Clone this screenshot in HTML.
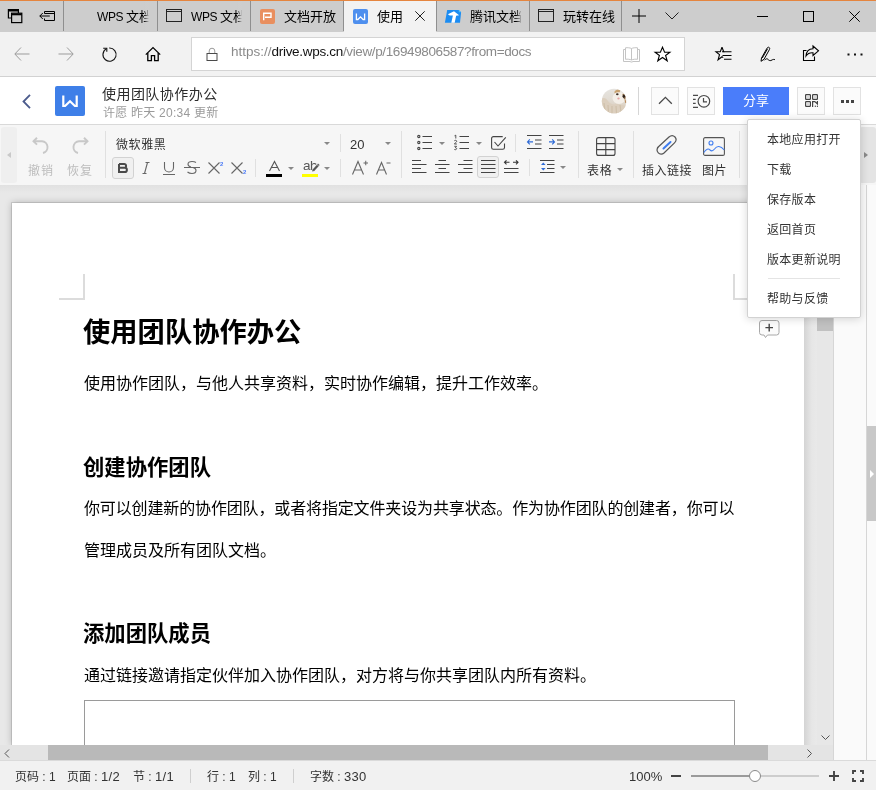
<!DOCTYPE html>
<html lang="zh-CN">
<head>
<meta charset="utf-8">
<title>使用团队协作办公</title>
<style>
*{box-sizing:border-box;margin:0;padding:0}
html,body{width:876px;height:790px;overflow:hidden;background:#fff}
body{position:relative;font-family:"Liberation Sans","Noto Sans CJK SC",sans-serif;color:#333;font-size:12px}
.a{position:absolute}
.t{position:absolute;white-space:nowrap;line-height:16px;height:16px;will-change:transform}
svg{position:absolute;overflow:visible}
/* browser chrome */
#accent{left:0;top:0;width:876px;height:1px;background:#e5853f}
#tabbar{left:0;top:1px;width:876px;height:31px;background:#cdcdcd}
.tsep{top:1px;width:1px;height:30px;background:#8f8f8f}
.tab{top:1px;height:31px;overflow:hidden}
.tabtxt{font-size:13px;color:#000;top:8px}
#addr{left:0;top:32px;width:876px;height:45px;background:#f2f2f2;border-bottom:1px solid #d2d2d2}
#urlbox{left:191px;top:37px;width:494px;height:34px;background:#fff;border:1px solid #d4d4d4}
/* wps header */
#hdr{left:0;top:77px;width:876px;height:48px;background:#fff;border-bottom:1px solid #d9d9d9}
.hbtn{top:87px;width:28px;height:28px;border:1px solid #e2e2e2;background:#fbfbfb}
/* toolbar */
#tb{left:0;top:125px;width:876px;height:60px;background:#f6f6f6}
.vsep{width:1px;background:#e0e0e0}
.lab{font-size:12px;color:#333}
.dis{color:#bdbdbd}
.dd{width:0;height:0;border-left:3px solid transparent;border-right:3px solid transparent;border-top:3px solid #888}
/* doc */
#docbg{left:0;top:185px;width:834px;height:560px;background:linear-gradient(180deg,#e1e1e1,#e8e8e8 8px,#e8e8e8)}
#page{left:12px;top:203px;width:792px;height:542px;background:#fff;box-shadow:0 0 0 1px rgba(0,0,0,.10),0 0 7px rgba(0,0,0,.25)}
.p{font-size:16px;line-height:24px;height:24px;color:#000}
.h1{font-size:27.3px;line-height:36px;height:36px;font-weight:700;color:#000}
.h2{font-size:21.33px;line-height:30px;height:30px;font-weight:700;color:#000}
/* menu */
#menu{left:747px;top:119px;width:114px;height:199px;background:#fff;border:1px solid #d2d2d2;border-radius:2px;box-shadow:0 1px 8px rgba(0,0,0,.16)}
.mi{left:767px;font-size:12px;color:#333;letter-spacing:0.3px}
/* status */
#status{left:0;top:760px;width:876px;height:30px;background:#f1f1f1;border-top:1px solid #dadada}
.st{font-size:12px;color:#333;top:769px}
</style>
</head>
<body>
<!-- BROWSER TABBAR -->
<div class="a" id="accent"></div>
<div class="a" id="tabbar"></div>
<!-- tab bar icons -->
<svg style="left:7px;top:8px" width="16" height="16" viewBox="0 0 16 16" fill="none" stroke="#000" stroke-width="1.200"><path d="M11.400 5V1.500H1.400V10h3.200"/><path d="M1.400 2.600h10" stroke-width="1.800"/><rect x="4.600" y="5.200" width="10.200" height="9.400"/><path d="M4.600 6.400h10.200" stroke-width="1.800"/></svg>
<svg style="left:39px;top:10px" width="17" height="12" viewBox="0 0 17 12" fill="none" stroke="#000" stroke-width="1"><path d="M5.5 3.5v-2h10v9h-10v-2"/><path d="M5.5 3.5h10" stroke-width="1"/><path d="M0.8 6h10M3.8 3L0.8 6l3 3"/></svg>
<div class="a tsep" style="left:63px"></div>
<div class="a tab" style="left:64px;width:93px"><div class="t tabtxt" style="left:33px"><span style="font-size:12px;letter-spacing:-0.4px">WPS </span>文档</div><div class="a" style="left:80px;top:0;width:13px;height:30px;background:linear-gradient(90deg,rgba(205,205,205,0),#cdcdcd 5px)"></div></div>
<div class="a tsep" style="left:157px"></div>
<div class="a tab" style="left:158px;width:92px"><div class="t tabtxt" style="left:33px"><span style="font-size:12px;letter-spacing:-0.4px">WPS </span>文档</div><div class="a" style="left:79px;top:0;width:13px;height:30px;background:linear-gradient(90deg,rgba(205,205,205,0),#cdcdcd 5px)"></div></div>
<svg style="left:166px;top:9px" width="16" height="13" viewBox="0 0 16 13" fill="none" stroke="#222" stroke-width="1"><rect x="0.500" y="0.500" width="15" height="12"/><path d="M0.500 2.500h15"/></svg>
<div class="a tsep" style="left:250px"></div>
<div class="a" style="left:260px;top:9px;width:15px;height:15px;background:#e98f5f;border-radius:2px"></div>
<svg style="left:260px;top:9px" width="15" height="15" viewBox="0 0 15 15" fill="none" stroke="#fff" stroke-width="1.4"><path d="M3.700 11.300V4.200h7.300v4H5"/></svg>
<div class="a tab" style="left:251px;width:92px"><div class="t tabtxt" style="left:33px">文档开放</div></div>
<!-- active tab -->
<div class="a tsep" style="left:343px"></div><div class="a" style="left:344px;top:1px;width:92px;height:31px;background:#f2f2f2"></div>
<div class="a" style="left:353px;top:9px;width:15px;height:15px;background:#4e8fee;border-radius:2px"></div>
<svg style="left:353px;top:9px" width="15" height="15" viewBox="0 0 15 15" fill="none" stroke="#fff" stroke-width="1.300"><path d="M3.400 4.500v6h1.500L7.500 7.900l2.600 2.600h1.500v-6"/></svg>
<div class="t tabtxt" style="left:377px;top:9px;width:25.500px;overflow:hidden">使用团</div>

<svg style="left:415px;top:11px" width="10" height="10" viewBox="0 0 10 10" fill="none" stroke="#222" stroke-width="1"><path d="M0.300 0.300l9.400 9.400M9.700 0.300l-9.400 9.400"/></svg>
<div class="a tsep" style="left:436px"></div>
<!-- tencent -->
<svg style="left:444px;top:9px" width="18" height="15" viewBox="0 0 18 15"><path d="M3.200 1h11.600l2.300 2.300L16 13.800H0.900z" fill="#1b8cf2"/><path d="M14.800 1l2.300 2.300h-2.300z" fill="#3cc4ff"/><path d="M10 2.200L3.900 5.200l1.800 1.300h3.200L7.300 13.800h3.400l1.400-7 3 -0.500z" fill="#fff"/></svg>
<div class="t tabtxt" style="left:470px;top:9px">腾讯文档</div>
<div class="a" style="left:516px;top:2px;width:12px;height:29px;background:linear-gradient(90deg,rgba(205,205,205,0),#cdcdcd 6px)"></div>
<div class="a tsep" style="left:529px"></div>
<svg style="left:538px;top:9px" width="16" height="13" viewBox="0 0 16 13" fill="none" stroke="#222" stroke-width="1"><rect x="0.500" y="0.500" width="15" height="12"/><path d="M0.500 2.500h15"/></svg>
<div class="t tabtxt" style="left:563px;top:9px">玩转在线</div>
<div class="a tsep" style="left:621px"></div>
<svg style="left:632px;top:9px" width="14" height="14" viewBox="0 0 14 14" fill="none" stroke="#000" stroke-width="1"><path d="M7 0v14M0 7h14"/></svg>
<svg style="left:665px;top:12px" width="14" height="8" viewBox="0 0 14 8" fill="none" stroke="#222" stroke-width="1"><path d="M0.5 0.5l6.5 6.5l6.5-6.5"/></svg>
<svg style="left:757px;top:16px" width="11" height="1" viewBox="0 0 11 1"><rect width="11" height="1" fill="#000"/></svg>
<svg style="left:803px;top:11px" width="11" height="11" viewBox="0 0 11 11" fill="none" stroke="#000" stroke-width="1"><rect x="0.5" y="0.5" width="10" height="10"/></svg>
<svg style="left:849px;top:11px" width="11" height="11" viewBox="0 0 11 11" fill="none" stroke="#000" stroke-width="1"><path d="M0.3 0.3l10.4 10.4M10.7 0.3L0.3 10.7"/></svg>
<!--TABS-->
<!-- ADDRESS BAR -->
<div class="a" id="addr"></div>
<div class="a" id="urlbox"></div>
<!-- back / forward -->
<svg style="left:14px;top:47px" width="16" height="14" viewBox="0 0 16 14" fill="none" stroke="#9b9b9b" stroke-width="1"><path d="M15.5 7H1M7 0.5L0.8 7l6.2 6.5"/></svg>
<svg style="left:58px;top:47px" width="16" height="14" viewBox="0 0 16 14" fill="none" stroke="#9b9b9b" stroke-width="1"><path d="M0.5 7H15M9 0.5L15.2 7L9 13.5"/></svg>
<!-- refresh -->
<svg style="left:101px;top:46px" width="17" height="16" viewBox="0 0 17 16" fill="none" stroke="#111" stroke-width="1.1"><path d="M5.2 2.9A6.6 6.6 0 1 0 8.2 2"/><path d="M2.2 2.2h3.6v3.6" stroke-width="1.1"/></svg>
<!-- home -->
<svg style="left:145px;top:46px" width="16" height="16" viewBox="0 0 16 16" fill="none" stroke="#000" stroke-width="1.3"><path d="M0.8 8.6L8 1.6l7.2 7"/><path d="M2.8 7v7.7h3.6v-5h3.2v5h3.6V7"/></svg>
<!-- lock -->
<svg style="left:206px;top:47px" width="12" height="14" viewBox="0 0 12 14" fill="none" stroke="#555" stroke-width="1"><path d="M3.200 6.500V4a2.800 2.800 0 0 1 5.600 0v2.500" stroke="#9a9a9a"/><rect x="1" y="6.500" width="10" height="7" stroke="#4a4a4a"/></svg>
<div class="t" id="url" style="left:231px;top:43px;font-size:13.5px;line-height:18px;height:18px;color:#8a8a8a;letter-spacing:-0.3px"><span style="letter-spacing:0">https://</span><span id="dom" style="color:#111">drive.wps.cn</span><span style="letter-spacing:-0.38px">/view/p/16949806587?from=docs</span></div>
<!-- book -->
<svg style="left:623px;top:47px" width="17" height="15" viewBox="0 0 17 15" fill="none" stroke="#c4c4c4" stroke-width="1"><path d="M8.5 1.5v11.5M8.5 1.5C7 0.8 4.5 0.5 2.5 0.8v11.5c2-0.3 4.500 0 6 0.700M8.5 1.500C10 0.800 12.500 0.500 14.500 0.800v11.500c-2-0.300-4.500 0-6 0.700"/><path d="M2.500 2.500H0.500v12h6.500l1 0.500h1l1-0.500h6.500v-12h-2"/></svg>
<!-- star -->
<svg style="left:654px;top:46px" width="17" height="16" viewBox="0 0 17 16" fill="none" stroke="#000" stroke-width="1.1"><path d="M8.500 1.200l2.100 5h5.300l-4.300 3.300 1.600 5.300-4.700-3.300-4.700 3.300 1.600-5.300L1.100 6.200h5.300z"/></svg>
<!-- favorites hub -->
<svg style="left:715px;top:46px" width="18" height="16" viewBox="0 0 18 16" fill="none" stroke="#000" stroke-width="1.1"><path d="M7 1.200l1.700 4.500h-0.200 0.200M8.700 5.700H7 M7 1.200L5.300 5.700H0.900l3.600 3-1.400 5 3.900-3 1.200 0.900"/><path d="M8.500 5.700h8M7.500 9.500h9M9 13.300h7.500"/></svg>
<!-- pen -->
<svg style="left:760px;top:46px" width="16" height="16" viewBox="0 0 16 16" fill="none" stroke="#000" stroke-width="1"><path d="M1 15.300l0.500-3.300L7 2.200c0.600-1 1.500-1.200 2.100-0.800 0.700 0.400 0.800 1.300 0.300 2.200L4 13.300z"/><path d="M2.300 12l5.300-9.300"/><path d="M4.500 14.300c1.300-1.700 2.600-1.900 3.500-0.900 1 1.100 2.300 1.800 4 0.600 0.900-0.600 1.800-0.800 3-0.300"/></svg>
<!-- share -->
<svg style="left:802px;top:45px" width="18" height="17" viewBox="0 0 18 17" fill="none" stroke="#000" stroke-width="1.100"><path d="M4.500 5.500H1.500v10h11v-4"/><path d="M11 1l5.500 4.800L11 10.500V7.800c-3.500-0.300-5.500 1-7 3.200 0.300-4 2.500-7 7-7.200z"/></svg>
<!-- dots -->
<svg style="left:847px;top:53px" width="16" height="3" viewBox="0 0 16 3" fill="#111"><rect x="0.500" y="0.500" width="2" height="2"/><rect x="7" y="0.500" width="2" height="2"/><rect x="13.500" y="0.500" width="2" height="2"/></svg>
<!--ADDR-->
<!-- WPS HEADER -->
<div class="a" id="hdr"></div>
<svg style="left:22px;top:94px" width="9" height="15" viewBox="0 0 9 15" fill="none" stroke="#4b5b8c" stroke-width="1.8"><path d="M8 0.800L1.500 7.500L8 14.200"/></svg>
<div class="a" style="left:55px;top:86px;width:30px;height:30px;background:#3e7fe8;border-radius:2px"></div>
<svg style="left:55px;top:86px" width="30" height="30" viewBox="0 0 30 30" fill="none" stroke="#fff" stroke-width="2.200"><path d="M8.300 9.500v10.500h1.800L15 15.200l4.900 4.800h1.800V9.500"/></svg>
<div class="t" style="left:102px;top:85px;font-size:14px;line-height:18px;height:18px;color:#2b2b2b;letter-spacing:0.45px">使用团队协作办公</div>
<div class="t" style="left:102.500px;top:105px;font-size:12px;color:#9a9a9a;letter-spacing:0.24px">许愿 昨天 20:34 更新</div>
<!-- avatar -->
<svg style="left:601px;top:88px" width="26" height="26" viewBox="0 0 26 26"><defs><linearGradient id="av" x1="0" y1="0" x2="0" y2="1"><stop offset="0" stop-color="#e6e4e0"/><stop offset="0.450" stop-color="#e2dcd3"/><stop offset="1" stop-color="#d6c8b6"/></linearGradient><clipPath id="avc"><circle cx="13.100" cy="13" r="12.300"/></clipPath></defs><circle cx="13.100" cy="13" r="12.300" fill="url(#av)"/><g clip-path="url(#avc)"><path d="M0 11c3-2 5-1 7 2 2 3 5 4 9 3l10 2v9H0z" fill="#dccfbe"/><path d="M3 15l1 8M7 17l0.500 8M11 18l0 7M15 18l0.500 7M19 17l1 7" stroke="#cfc0aa" stroke-width="1.200"/><ellipse cx="18" cy="10" rx="6.500" ry="6" fill="#f4efe8"/><path d="M13.500 3.500c2-2 4-2.500 6-1.500l-1 2.500c-2-0.500-3.500 0-5 1z" fill="#c9a270"/><path d="M21.500 6c1.500-0.500 3 0.500 3.500 2.500l-1 3c-1.500-0.500-2.500-2.500-2.500-5.500z" fill="#8a6a48"/><ellipse cx="16.300" cy="6.200" rx="1.300" ry="1" fill="#3a2d24"/><ellipse cx="22.800" cy="8.300" rx="1.200" ry="1.500" fill="#2c221c"/><ellipse cx="17.500" cy="10.500" rx="1.200" ry="1" fill="#e6a3a3"/><path d="M24 11.500l0.800 3.500" stroke="#b98a5a" stroke-width="1"/></g></svg>
<div class="a" style="left:638px;top:87px;width:1px;height:28px;background:#d6d6d6"></div>
<div class="a hbtn" style="left:651px"></div>
<svg style="left:658px;top:96px" width="14" height="8" viewBox="0 0 14 8" fill="none" stroke="#4a4a4a" stroke-width="1.300"><path d="M1 7.800L7.400 1.400l6.400 6.400"/></svg>
<div class="a hbtn" style="left:687px"></div>
<svg style="left:693px;top:94px" width="18" height="15" viewBox="0 0 18 15" fill="none" stroke="#4a4a4a" stroke-width="1.200"><circle cx="10.900" cy="7.300" r="5.800"/><path d="M10.500 4v3.800h3.500"/><path d="M0 1.400h5M0 5.400h2.700M0 9.400h2.700M0 13.400h5"/></svg>
<div class="a" style="left:723px;top:87px;width:66px;height:28px;background:#4a7dfa"></div>
<div class="t" style="left:723px;top:91px;width:66px;text-align:center;font-size:13px;line-height:20px;height:20px;color:#fff">分享</div>
<div class="a hbtn" style="left:797px"></div>
<svg style="left:805px;top:94px" width="13" height="13" viewBox="0 0 13 13" fill="none" stroke="#444" stroke-width="1.200"><rect x="0.600" y="0.600" width="4.800" height="4.800" rx="0.600"/><rect x="7.600" y="0.600" width="4.800" height="4.800" rx="0.600"/><rect x="0.600" y="7.600" width="4.800" height="4.800" rx="0.600"/><path d="M7.600 13V7.600h2.200l2.600 2.300V7"/><path d="M10.300 11.600V13M12.400 11.600V13" stroke-width="1"/><g fill="#c4c4c4" stroke="none"><rect x="2.200" y="2.200" width="1.600" height="1.600"/><rect x="9.200" y="2.200" width="1.600" height="1.600"/><rect x="2.200" y="9.200" width="1.600" height="1.600"/></g></svg>
<div class="a hbtn" style="left:833px"></div>
<svg style="left:841px;top:100px" width="14" height="3" viewBox="0 0 14 3" fill="#444"><rect x="0" y="0" width="3" height="3"/><rect x="5" y="0" width="3" height="3"/><rect x="10" y="0" width="3" height="3"/></svg>
<!--HDR-->
<!-- TOOLBAR -->
<div class="a" id="tb"></div>
<div class="a" style="left:1px;top:127px;width:16px;height:56px;background:#efefef;border-radius:3px"></div>
<div class="a" style="left:7px;top:152px;width:0;height:0;border-top:3.500px solid transparent;border-bottom:3.500px solid transparent;border-right:4px solid #c9c9c9"></div>
<!-- undo / redo -->
<svg style="left:32px;top:137px" width="18" height="17" viewBox="0 0 18 17" fill="none" stroke="#c8c8c8" stroke-width="1.900"><path d="M1.500 4.200h8.500a6 6 0 0 1 1 11.800"/><path d="M5 0.800L1.500 4.200L5 7.600"/></svg>
<svg style="left:71px;top:137px" width="18" height="17" viewBox="0 0 18 17" fill="none" stroke="#c8c8c8" stroke-width="1.900"><path d="M16.500 4.200H8a6 6 0 0 0-1 11.800"/><path d="M13 0.800l3.500 3.400L13 7.600"/></svg>
<div class="t lab dis" style="left:28px;top:163px;letter-spacing:1px">撤销</div>
<div class="t lab dis" style="left:67px;top:163px;letter-spacing:1px">恢复</div>
<div class="a vsep" style="left:105px;top:131px;height:47px"></div>
<div class="t lab" style="left:116px;top:137px;letter-spacing:0.6px">微软雅黑</div>
<div class="a dd" style="left:324px;top:142px"></div>
<!-- B I U S X2 X2 -->
<div class="a" style="left:112px;top:157px;width:22px;height:22px;border:1px solid #d2d2d2;border-radius:3px;background:#f0f0f0"></div>
<svg style="left:118px;top:163px" width="10" height="10" viewBox="0 0 10 10" fill="none" stroke="#4a4a4a" stroke-width="2"><path d="M1 1h5.200a1.900 1.900 0 0 1 0 3.800H1M1 4.800h5.800a2.100 2.100 0 0 1 0 4.200H1zV1"/></svg>
<svg style="left:142px;top:162px" width="8" height="12" viewBox="0 0 8 12" fill="none" stroke="#666" stroke-width="1.100"><path d="M3.500 0.500h4M0.500 11.500h4M5.500 0.500l-3 11"/></svg>
<svg style="left:163px;top:162px" width="12" height="13" viewBox="0 0 12 13" fill="none" stroke="#666" stroke-width="1.100"><path d="M1.500 0v5.500a4.500 4.500 0 0 0 9 0V0M0 12.500h12"/></svg>
<svg style="left:184px;top:161px" width="16" height="13" viewBox="0 0 16 13" fill="none" stroke="#666" stroke-width="1.100"><path d="M12 1.500C11 0.800 9.500 0.500 8 0.500c-2.500 0-4 1.200-4 2.800 0 1.500 1 2.200 3 2.700M9 6.500c2 0.500 3 1.500 3 3 0 1.800-1.700 3-4 3-1.800 0-3.300-0.500-4.500-1.500M0 6.500h16"/></svg>
<svg style="left:208px;top:161px" width="16" height="13" viewBox="0 0 16 13" fill="none" stroke="#666" stroke-width="1.100"><path d="M0.500 1.500l11 11M11.500 1.500l-11 11"/></svg>
<div class="t" style="left:220px;top:160px;font-size:6px;line-height:8px;height:8px;color:#4a7af6;font-weight:700">2</div>
<svg style="left:231px;top:161px" width="16" height="13" viewBox="0 0 16 13" fill="none" stroke="#666" stroke-width="1.100"><path d="M0.500 1.500l11 11M11.500 1.500l-11 11"/></svg>
<div class="t" style="left:243px;top:168px;font-size:6px;line-height:8px;height:8px;color:#4a7af6;font-weight:700">2</div>
<div class="a vsep" style="left:255px;top:159px;height:18px"></div>
<!-- font color -->
<svg style="left:269px;top:161px" width="11" height="10" viewBox="0 0 11 10" fill="none" stroke="#555" stroke-width="1.100"><path d="M0.500 10L5.500 0.500L10.500 10M2.300 6.500h6.400"/></svg>
<div class="a" style="left:266px;top:174px;width:16px;height:3px;background:#000"></div>
<div class="a dd" style="left:288px;top:167px"></div>
<div class="t" style="left:302.500px;top:158px;font-size:13.500px;color:#555;letter-spacing:-0.500px">ab</div>
<svg style="left:310.800px;top:163px" width="9" height="9" viewBox="0 0 9 9"><path d="M2.200 7.600L6.800 2.400" stroke="#f6f6f6" stroke-width="4.200" fill="none"/><path d="M2.200 7.600L6.800 2.400" stroke="#555" stroke-width="2.200" stroke-linecap="butt" fill="none"/><path d="M1.200 8.600l0.300-2 1.700 1.500z" fill="#555"/><path d="M6.200 1.400l0.800-0.800 1.600 1.500-0.800 0.800z" fill="#555"/></svg>
<div class="a" style="left:302px;top:174px;width:16px;height:3px;background:#ffff00"></div>
<div class="a dd" style="left:324px;top:167px"></div>
<div class="a vsep" style="left:340px;top:134px;height:18px"></div>
<div class="a vsep" style="left:340px;top:159px;height:18px"></div>
<div class="t lab" style="left:350px;top:137px;font-size:13px">20</div>
<div class="a dd" style="left:385px;top:142px"></div>
<!-- A+ A- -->
<svg style="left:352px;top:160px" width="17" height="15" viewBox="0 0 17 15" fill="none" stroke="#666" stroke-width="1.100"><path d="M0.500 14.500L6 1.500L11.500 14.500M2.500 10h7"/><path d="M11.500 3h4.500M13.750 0.750v4.500" stroke-width="1"/></svg>
<svg style="left:376px;top:160px" width="15" height="15" viewBox="0 0 15 15" fill="none" stroke="#666" stroke-width="1.100"><path d="M0.500 14.500L5.500 2.500L10.500 14.500M2.300 10h6.400"/><path d="M10.500 3h4" stroke-width="1"/></svg>
<div class="a vsep" style="left:401px;top:131px;height:47px"></div>
<!-- bullets -->
<svg style="left:417px;top:135px" width="16" height="15" viewBox="0 0 16 15" fill="none" stroke="#444" stroke-width="1.100"><circle cx="1.800" cy="1.500" r="1.100"/><circle cx="1.800" cy="7.500" r="1.100"/><circle cx="1.800" cy="13.500" r="1.100"/><path d="M5.500 1.500h9.500M5.500 7.500h9.500M5.500 13.500h9.500"/></svg>
<div class="a dd" style="left:439px;top:142px"></div>
<svg style="left:454px;top:135px" width="16" height="15" viewBox="0 0 16 15" fill="none" stroke="#444" stroke-width="1.100"><path d="M5.500 1.500h9.500M5.500 7.500h9.500M5.500 13.500h9.500"/><path d="M0.500 0.800l1.300-0.600v3.300M0.300 5.800c0.700-0.800 2.400-0.600 2.400 0.500 0 0.900-1.600 1.500-2.400 2.700h2.600M0.300 11.300h2.300l-1.300 1.400c1.700-0.200 1.900 2-0.100 2-0.500 0-0.800-0.200-1-0.400" stroke-width="0.900"/></svg>
<div class="a dd" style="left:476px;top:142px"></div>
<svg style="left:491px;top:136px" width="16" height="14" viewBox="0 0 16 14" fill="none" stroke="#444" stroke-width="1.100"><path d="M13.500 7.500v4a1.800 1.800 0 0 1-1.800 1.800H2.400a1.800 1.800 0 0 1-1.800-1.800V2.400a1.800 1.800 0 0 1 1.800-1.800h9.300"/><path d="M3.500 6l3.500 4L14.800 1.300"/></svg>
<div class="a vsep" style="left:515px;top:134px;height:18px"></div>
<!-- outdent / indent -->
<svg style="left:527px;top:135px" width="15" height="14" viewBox="0 0 15 14" fill="none" stroke="#444" stroke-width="1.100"><path d="M0 0.500h14.500M8 5h6.500M8 9h6.500M0 13.500h14.500"/><path d="M0.500 6.900h5.500M2.800 4.400L0.500 6.900l2.300 2.500" stroke="#2f6bd6"/></svg>
<svg style="left:549px;top:135px" width="15" height="14" viewBox="0 0 15 14" fill="none" stroke="#444" stroke-width="1.100"><path d="M0 0.500h14.500M8 5h6.500M8 9h6.500M0 13.500h14.500"/><path d="M0 6.900h5.500M3.200 4.400l2.300 2.500-2.300 2.500" stroke="#2f6bd6"/></svg>
<!-- align row -->
<svg style="left:412px;top:160px" width="15" height="13" viewBox="0 0 15 13" fill="none" stroke="#444" stroke-width="1.100"><path d="M0 0.500h9M0 4.500h14.500M0 8.500h9M0 12.500h14.500"/></svg>
<svg style="left:435px;top:160px" width="15" height="13" viewBox="0 0 15 13" fill="none" stroke="#444" stroke-width="1.100"><path d="M3.500 0.500h7.500M0 4.500h14.500M3.500 8.500h7.500M0 12.500h14.500"/></svg>
<svg style="left:458px;top:160px" width="15" height="13" viewBox="0 0 15 13" fill="none" stroke="#444" stroke-width="1.100"><path d="M5.500 0.500h9M0 4.500h14.500M5.500 8.500h9M0 12.500h14.500"/></svg>
<div class="a" style="left:477px;top:156px;width:22px;height:22px;border:1px solid #d2d2d2;border-radius:3px;background:#f0f0f0"></div>
<svg style="left:481px;top:160px" width="15" height="13" viewBox="0 0 15 13" fill="none" stroke="#444" stroke-width="1.100"><path d="M0 0.500h14.500M0 4.500h14.500M0 8.500h14.500M0 12.500h14.500"/></svg>
<svg style="left:504px;top:159px" width="15" height="14" viewBox="0 0 15 14" fill="none" stroke="#444" stroke-width="1.100"><path d="M0 9.500h14.500M0 13.500h14.500"/><path d="M0.500 3.300h5M2.500 1.300l-2 2 2 2M14 3.300H9M12 1.300l2 2-2 2" stroke="#333"/></svg>
<div class="a vsep" style="left:529px;top:159px;height:17px"></div>
<svg style="left:540px;top:160px" width="15" height="13" viewBox="0 0 15 13" fill="none" stroke="#444" stroke-width="1.100"><path d="M0 0.500h14.500M7 4.500h7.500M7 8.500h7.500M0 12.500h14.500"/><path d="M1 5l2.300-2.500L5.600 5zM1 8l2.300 2.500L5.600 8z" fill="#2f6bd6" stroke="none"/></svg>
<div class="a dd" style="left:560px;top:166px"></div>
<div class="a vsep" style="left:578px;top:131px;height:47px"></div>
<!-- table -->
<svg style="left:596px;top:137px" width="20" height="19" viewBox="0 0 20 19" fill="none" stroke="#444" stroke-width="1.100"><rect x="0.600" y="0.600" width="18.400" height="17.800" rx="2"/><path d="M0.600 6.600h18.400M0.600 12.600h18.400M9.800 0.600v17.800"/></svg>
<div class="t lab" style="left:587px;top:163px;letter-spacing:0.8px">表格</div>
<div class="a dd" style="left:617px;top:168px"></div>
<div class="a vsep" style="left:633px;top:131px;height:47px"></div>
<!-- link -->
<svg style="left:656px;top:135px" width="22" height="21" viewBox="0 0 22 21" fill="none" stroke="#555" stroke-width="1.200"><path d="M2.200 12.500L13 2.500c2-1.800 4.500-1.600 6 0 1.500 1.700 1.300 4-0.500 5.800L8 18.500c-1.800 1.600-4.200 1.500-5.700-0.200-1.500-1.600-1.500-4 0-5.800z" transform="translate(0,-0.500)"/><path d="M7.500 13.500l7-6.500" stroke="#3f7df0" stroke-width="2" stroke-linecap="round"/></svg>
<div class="t lab" style="left:642px;top:163px;letter-spacing:0.5px">插入链接</div>
<!-- image -->
<svg style="left:703px;top:137px" width="22" height="19" viewBox="0 0 22 19" fill="none" stroke="#555" stroke-width="1.100"><rect x="0.600" y="0.600" width="20.800" height="17.800" rx="1.500"/><circle cx="8" cy="6" r="2" stroke="#3f7df0"/><path d="M0.800 15.500c2.500-3.500 4.500-4.500 6.200-2.500 1.500 1.500 3 1 4.500-1 2.500-3.500 6-3.500 9.800 1" stroke="#3f7df0"/></svg>
<div class="t lab" style="left:702px;top:163px;letter-spacing:0.6px">图片</div>
<div class="a vsep" style="left:739px;top:131px;height:47px"></div>
<!-- right scroller -->
<div class="a" style="left:859px;top:127px;width:17px;height:56px;background:#e4e4e4;border-radius:3px"></div>
<div class="a" style="left:864px;top:152px;width:0;height:0;border-top:3.500px solid transparent;border-bottom:3.500px solid transparent;border-left:4px solid #8a8a8a"></div>
<!--TB-->
<!-- DOC -->
<div class="a" id="docbg"></div>
<div class="a" id="page"></div>
<div class="a" style="left:83px;top:274px;width:2px;height:26px;background:#dcdcdc"></div>
<div class="a" style="left:59px;top:298px;width:26px;height:2px;background:#dcdcdc"></div>
<div class="a" style="left:733px;top:274px;width:2px;height:26px;background:#dcdcdc"></div>
<div class="a" style="left:733px;top:298px;width:26px;height:2px;background:#dcdcdc"></div>
<div class="t h1" id="h1" style="left:83px;top:315px">使用团队协作办公</div>
<div class="t p" id="p1" style="left:84px;top:372px">使用协作团队，与他人共享资料，实时协作编辑，提升工作效率。</div>
<div class="t h2" id="h2a" style="left:83px;top:453px">创建协作团队</div>
<div class="t p" id="p2" style="left:84px;top:497px;letter-spacing:-0.14px">你可以创建新的协作团队，或者将指定文件夹设为共享状态。作为协作团队的创建者，你可以</div>
<div class="t p" id="p3" style="left:84px;top:539px">管理成员及所有团队文档。</div>
<div class="t h2" id="h2b" style="left:83px;top:619px">添加团队成员</div>
<div class="t p" id="p4" style="left:84px;top:664px">通过链接邀请指定伙伴加入协作团队，对方将与你共享团队内所有资料。</div>
<div class="a" style="left:84px;top:700px;width:651px;height:50px;border:1px solid #9a9a9a;border-bottom:none"></div>
<!-- comment icon -->
<svg style="left:759px;top:320px" width="21" height="19" viewBox="0 0 21 19" fill="#fbfbfb" stroke="#a8a8a8" stroke-width="1"><path d="M3 0.500h14.500a2.500 2.500 0 0 1 2.500 2.500v9.500a2.500 2.500 0 0 1-2.500 2.500H8.500l-2 2.500-1.500-2.500H3a2.500 2.500 0 0 1-2.500-2.500V3A2.500 2.500 0 0 1 3 0.500z"/><path d="M10.200 3.800v7.600M6.400 7.600H14" stroke="#444" stroke-width="1.400"/></svg>
<!--DOC-->
<!-- RIGHT PANELS / SCROLLBARS -->
<!-- page right shadow + vscroll -->
<div class="a" style="left:804px;top:203px;width:13px;height:542px;background:linear-gradient(90deg,#d4d4d4,#e6e6e6 60%,#e9e9e9)"></div>
<div class="a" style="left:817px;top:185px;width:16px;height:560px;background:#e7e7e7"></div>
<div class="a" style="left:817px;top:316px;width:16px;height:15px;background:#c1c1c1"></div>
<svg style="left:821px;top:734.500px" width="9" height="6" viewBox="0 0 9 6" fill="none" stroke="#555" stroke-width="1"><path d="M0.500 0.500l4 4 4-4"/></svg>
<!-- right side panel -->
<div class="a" style="left:833px;top:185px;width:43px;height:575px;background:#fafafa;border-left:1px solid #d6d6d6"></div>
<div class="a" style="left:866px;top:185px;width:10px;height:575px;background:#fafafa;border-left:1px solid #d6d6d6"></div>
<div class="a" style="left:867px;top:426px;width:9px;height:95px;background:#c8c8c8"></div>
<div class="a" style="left:870px;top:470px;width:0;height:0;border-top:4px solid transparent;border-bottom:4px solid transparent;border-left:4.500px solid #fff"></div>
<!-- hscroll -->
<div class="a" style="left:0;top:745px;width:833px;height:16px;background:#e4e4e4"></div>
<div class="a" style="left:48px;top:745px;width:720px;height:15px;background:#b9b9b9"></div>
<svg style="left:4px;top:749px" width="6" height="9" viewBox="0 0 6 9" fill="none" stroke="#555" stroke-width="1"><path d="M5 0.500l-4 4 4 4"/></svg>
<svg style="left:806.500px;top:749px" width="6" height="9" viewBox="0 0 6 9" fill="none" stroke="#555" stroke-width="1"><path d="M0.500 0.500l4 4-4 4"/></svg>
<!--SCROLL-->
<!-- STATUS -->
<div class="a" id="status"></div>
<div class="t st" style="left:15px">页码 : 1</div>
<div class="t st" style="left:67px">页面 : <span style="font-size:13px;letter-spacing:0.3px">1/2</span></div>
<div class="t st" style="left:133px">节 : <span style="font-size:13px;letter-spacing:0.3px">1/1</span></div>
<div class="a" style="left:190px;top:769px;width:1px;height:14px;background:#cfcfcf"></div>
<div class="t st" style="left:207px">行 : 1</div>
<div class="t st" style="left:248px">列 : 1</div>
<div class="a" style="left:293px;top:769px;width:1px;height:14px;background:#cfcfcf"></div>
<div class="t st" style="left:310px">字数 : <span style="font-size:13px;letter-spacing:0.2px">330</span></div>
<div class="t st" style="left:629px;font-size:13px;top:769px">100%</div>
<div class="a" style="left:671px;top:775px;width:10px;height:2px;background:#444"></div>
<div class="a" style="left:691px;top:775px;width:64px;height:2px;background:#9a9a9a"></div>
<div class="a" style="left:755px;top:775px;width:64px;height:2px;background:#cdcdcd"></div>
<div class="a" style="left:749px;top:770px;width:12px;height:12px;border-radius:50%;background:#fff;border:1px solid #8a8a8a"></div>
<svg style="left:829px;top:771px" width="10" height="10" viewBox="0 0 10 10" fill="none" stroke="#444" stroke-width="1.900"><path d="M5 0v10M0 5h10"/></svg>
<svg style="left:852px;top:770px" width="12" height="12" viewBox="0 0 12 12" fill="none" stroke="#444" stroke-width="1.900"><path d="M1 4V1H4M8 1h3V4M11 8v3H8M4 11H1V8"/></svg>
<!--STATUS-->
<!-- MENU -->
<div class="a" id="menu"></div>
<div class="t mi" style="top:132px">本地应用打开</div>
<div class="t mi" style="top:162px">下载</div>
<div class="t mi" style="top:192px">保存版本</div>
<div class="t mi" style="top:222px">返回首页</div>
<div class="t mi" style="top:252px">版本更新说明</div>
<div class="a" style="left:768px;top:278px;width:72px;height:1px;background:#e4e4e4"></div>
<div class="t mi" style="top:291px">帮助与反馈</div>
<!--MENU-->
</body>
</html>
